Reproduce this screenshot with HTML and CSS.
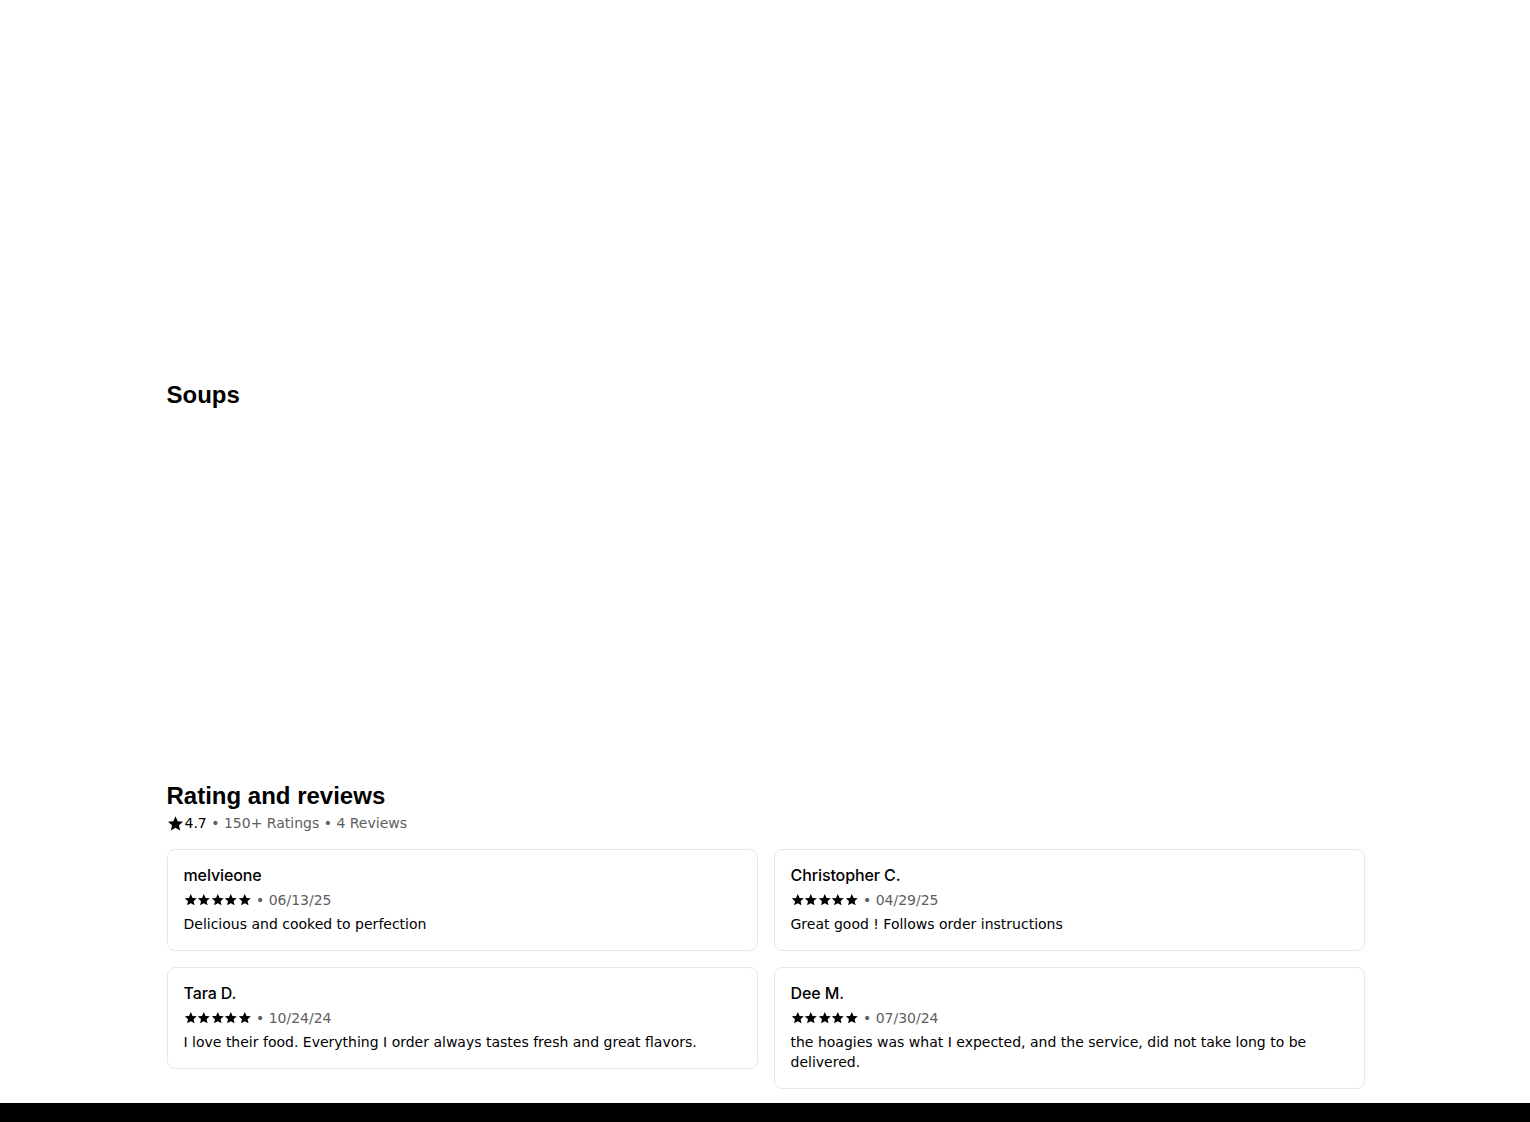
FILE: index.html
```html
<!DOCTYPE html>
<html lang="en">
<head>
<meta charset="utf-8">
<title>Store menu</title>
<link rel="stylesheet" href="styles.css">
</head>
<body>
<svg width="0" height="0" class="defs" aria-hidden="true">
  <defs>
    <symbol id="star" viewBox="0 0 24 24">
      <path d="M12 1.8l3.1 6.9 7.5.7-5.7 5 1.7 7.4L12 17.9l-6.6 3.9 1.7-7.4-5.7-5 7.5-.7z"/>
    </symbol>
  </defs>
</svg>
<main class="page">
  <div class="spacer-top"></div>
  <section class="menu-section">
    <h2 class="section-title">Soups</h2>
    <div class="section-body"></div>
  </section>
  <section class="reviews">
    <h2 class="section-title">Rating and reviews</h2>
    <div class="summary">
      <svg class="summary-star"><use href="#star"/></svg>
      <span class="score">4.7</span>
      <span class="muted">&nbsp;•&nbsp;150+ Ratings&nbsp;•&nbsp;4 Reviews</span>
    </div>
    <div class="review-grid">
      <article class="review-card">
        <div class="reviewer">melvieone</div>
        <div class="meta">
          <span class="stars"><svg><use href="#star"/></svg><svg><use href="#star"/></svg><svg><use href="#star"/></svg><svg><use href="#star"/></svg><svg><use href="#star"/></svg></span>
          <span class="muted">&nbsp;•&nbsp;06/13/25</span>
        </div>
        <p class="review-text">Delicious and cooked to perfection</p>
      </article>
      <article class="review-card">
        <div class="reviewer">Christopher C.</div>
        <div class="meta">
          <span class="stars"><svg><use href="#star"/></svg><svg><use href="#star"/></svg><svg><use href="#star"/></svg><svg><use href="#star"/></svg><svg><use href="#star"/></svg></span>
          <span class="muted">&nbsp;•&nbsp;04/29/25</span>
        </div>
        <p class="review-text">Great good ! Follows order instructions</p>
      </article>
      <article class="review-card">
        <div class="reviewer">Tara D.</div>
        <div class="meta">
          <span class="stars"><svg><use href="#star"/></svg><svg><use href="#star"/></svg><svg><use href="#star"/></svg><svg><use href="#star"/></svg><svg><use href="#star"/></svg></span>
          <span class="muted">&nbsp;•&nbsp;10/24/24</span>
        </div>
        <p class="review-text">I love their food. Everything I order always tastes fresh and great flavors.</p>
      </article>
      <article class="review-card">
        <div class="reviewer">Dee M.</div>
        <div class="meta">
          <span class="stars"><svg><use href="#star"/></svg><svg><use href="#star"/></svg><svg><use href="#star"/></svg><svg><use href="#star"/></svg><svg><use href="#star"/></svg></span>
          <span class="muted">&nbsp;•&nbsp;07/30/24</span>
        </div>
        <p class="review-text">the hoagies was what I expected, and the service, did not take long to be delivered.</p>
      </article>
    </div>
  </section>
</main>
<footer class="footer"></footer>
</body>
</html>
```

FILE: styles.css
```css
html, body {
  margin: 0;
  padding: 0;
  background: #ffffff;
  color: #000000;
  font-family: "DejaVu Sans", sans-serif;
  font-size: 14px;
  line-height: 20px;
}

.defs {
  position: absolute;
  width: 0;
  height: 0;
  overflow: hidden;
}

.page {
  width: 1198px;
  margin: 0 auto;
  padding-left: 1px;
}

.spacer-top {
  height: 379px;
}

.section-title {
  margin: 0;
  font-family: "Liberation Sans", Arial, sans-serif;
  font-weight: 700;
  font-size: 24px;
  line-height: 32px;
}

.section-body {
  height: 369px;
}

.summary {
  display: flex;
  align-items: center;
  height: 20px;
  margin-top: 1px;
  color: #000;
}

.summary-star {
  width: 17px;
  height: 17px;
  fill: #000;
  margin-right: 1px;
}

.muted {
  color: #5e5e5e;
}

.review-grid {
  display: grid;
  grid-template-columns: 1fr 1fr;
  gap: 16px;
  align-items: start;
  margin-top: 16px;
  margin-bottom: 14px;
}

.review-card {
  border: 1px solid #e8e8e8;
  border-radius: 8px;
  padding: 15px 16px 16px;
  display: flex;
  flex-direction: column;
  gap: 4px;
}

.reviewer {
  font-family: Inter, Roboto, sans-serif;
  font-weight: 500;
  font-size: 16px;
  line-height: 20px;
  letter-spacing: -0.1px;
  margin-bottom: 1px;
  color: #000;
}

.meta {
  display: flex;
  align-items: center;
  height: 20px;
}

.stars {
  display: flex;
  gap: 0;
}

.stars svg {
  width: 13.6px;
  height: 13.6px;
  fill: #000;
}

.review-text {
  margin: 0;
  color: #000;
}

.footer {
  height: 19px;
  background: #000;
}
```
